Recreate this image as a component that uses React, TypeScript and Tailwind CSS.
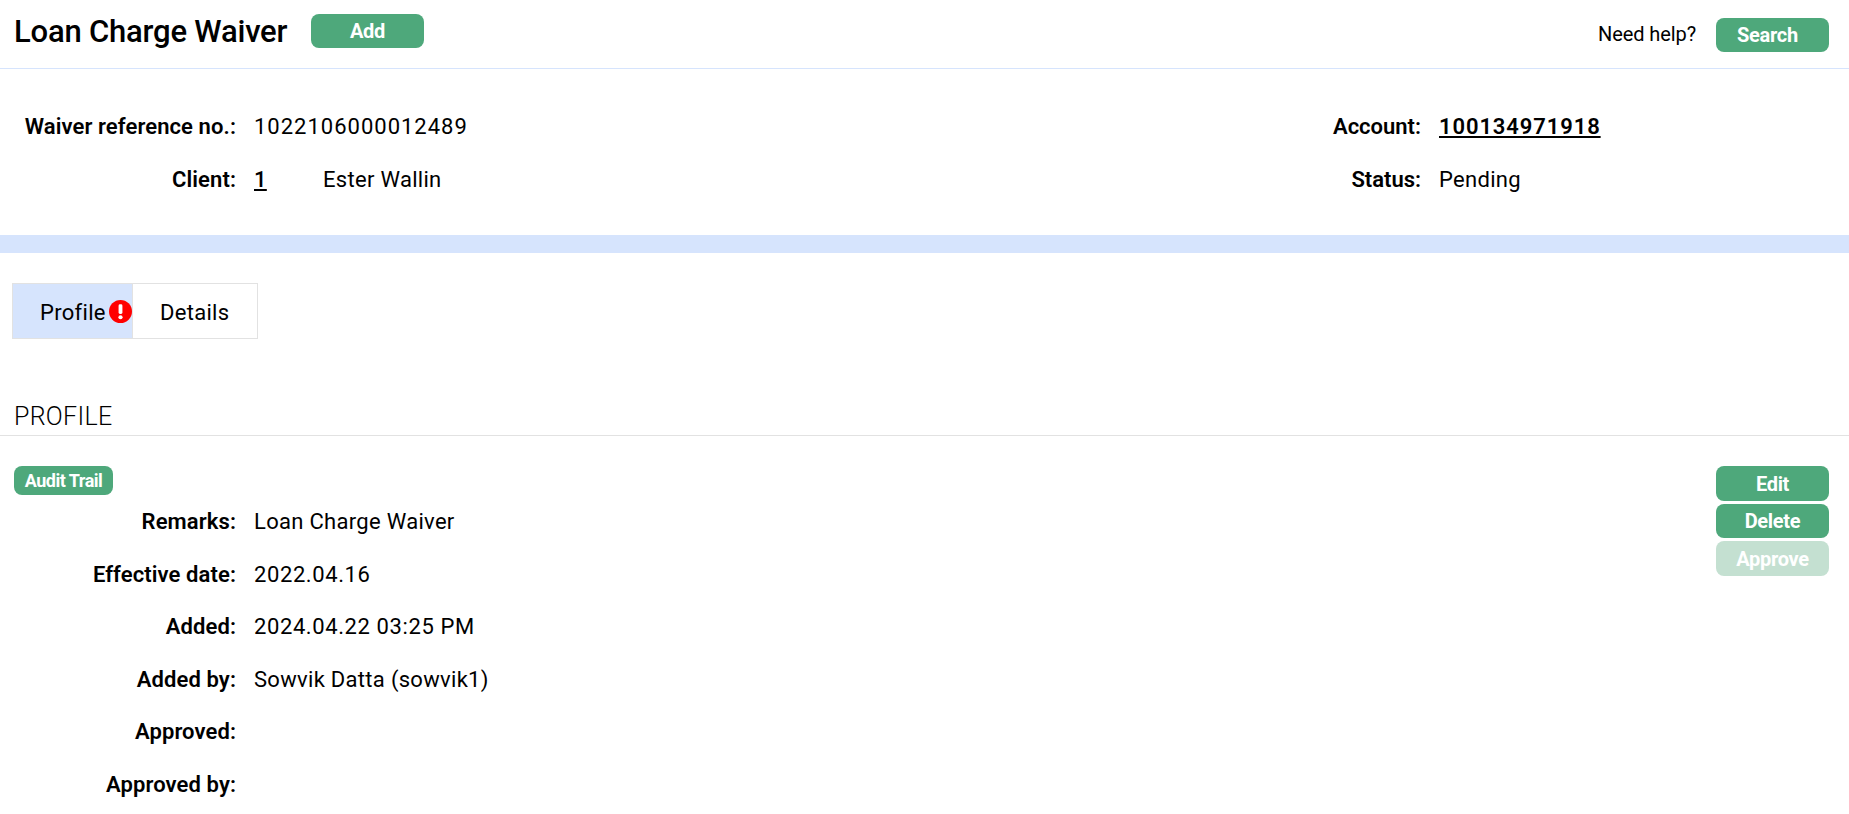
const Btn = ({ label, disabled, tall }: { label: string; disabled?: boolean; tall?: boolean }) => (
  <button
    className={
      disabled
        ? 'w-[113px] h-[35px] rounded-lg bg-[#c4e0d1] text-white text-[20px] font-bold tracking-[-0.3px]'
        : tall
          ? 'w-[113px] h-[35px] rounded-lg bg-[#4ea87b] text-white text-[20px] font-bold tracking-[-0.3px]'
          : 'w-[113px] h-[34px] rounded-lg bg-[#4ea87b] text-white text-[20px] font-bold tracking-[-0.3px]'
    }
  >
    {label}
  </button>
);

const Row = ({ label, children }: { label: string; children?: React.ReactNode }) => (
  <div className="flex items-center h-[52.5px] pt-[2px] text-[22px] leading-[32px]">
    <div className="w-[236px] text-right font-semibold tracking-[0.1px]">{label}</div>
    <div className="ml-[18px] tracking-[0.3px]">{children}</div>
  </div>
);

export default function App() {
  return (
    <div className="min-h-[814px] bg-white text-black font-['Roboto',sans-serif] overflow-hidden">
      <div className="flex items-start h-[69px] border-b border-[#d6e4fd] pl-[14px] pr-5">
        <h1 className="mt-[14px] text-[31px] leading-[36px] font-medium tracking-[-0.2px] w-[297px]">Loan Charge Waiver</h1>
        <div className="mt-[14px]">
          <Btn label="Add" />
        </div>
        <div className="ml-auto mt-[18px] flex items-center gap-5">
          <span className="text-[20px] tracking-[-0.1px] -mt-[2px]">Need help?</span>
          <button className="w-[113px] h-[34px] pr-[10px] rounded-lg bg-[#4ea87b] text-white text-[20px] font-bold tracking-[-0.3px]">
            Search
          </button>
        </div>
      </div>

      <div className="flex h-[166px] pt-[31px]">
        <div className="flex-1">
          <Row label="Waiver reference no.:">
            <span className="tracking-[1px]">1022106000012489</span>
          </Row>
          <Row label="Client:">
            <span className="flex">
              <a className="underline w-[69px] font-medium">1</a>
              <span>Ester Wallin</span>
            </span>
          </Row>
        </div>
        <div className="w-[728px] text-[22px] leading-[32px]">
          <div className="flex items-center h-[52.5px] pt-[2px]">
            <div className="w-[300px] text-right font-semibold">Account:</div>
            <a className="ml-[18px] font-semibold underline tracking-[0.9px]">100134971918</a>
          </div>
          <div className="flex items-center h-[52.5px] pt-[2px]">
            <div className="w-[300px] text-right font-semibold">Status:</div>
            <span className="ml-[18px] tracking-[0.3px]">Pending</span>
          </div>
        </div>
      </div>

      <div className="h-[18px] bg-[#d6e4fd]" />

      <div className="ml-3 mt-[30px] flex h-[56px] w-[246px] border border-[#e2e2e2] text-[22px] tracking-[0.3px]">
        <div className="flex items-center w-[119px] bg-[#d6e4fd] pl-[27px]">
          <span className="mt-[2px]">Profile</span>
          <svg viewBox="0 0 24 24" className="ml-[3px] w-[23px] h-[23px] shrink-0">
            <circle cx="12" cy="12" r="12" fill="#ff0000" />
            <rect x="10" y="4.5" width="4" height="10" rx="1.5" fill="#fff" />
            <circle cx="12" cy="18" r="2.2" fill="#fff" />
          </svg>
        </div>
        <div className="flex items-center border-l border-[#e2e2e2] pl-[27px]">
          <span className="mt-[2px]">Details</span>
        </div>
      </div>

      <h2 className="mt-[60px] pl-[14px] h-[37px] text-[25px] leading-[36px] font-light tracking-[0.3px] border-b border-[#e2e2e2]">PROFILE</h2>

      <div className="flex items-start pt-[30px] pr-5">
        <div className="flex-1">
          <button className="ml-[14px] w-[99px] h-[29px] rounded-lg bg-[#4ea87b] text-white text-[18px] leading-[27px] font-bold tracking-[-0.5px]">
            Audit Trail
          </button>
          <Row label="Remarks:">Loan Charge Waiver</Row>
          <Row label="Effective date:">
            <span className="tracking-[0.6px]">2022.04.16</span>
          </Row>
          <Row label="Added:">
            <span className="tracking-[0.6px]">2024.04.22 03:25 PM</span>
          </Row>
          <Row label="Added by:">Sowvik Datta (sowvik1)</Row>
          <Row label="Approved:" />
          <Row label="Approved by:" />
        </div>
        <div className="flex flex-col gap-[3px]">
          <Btn label="Edit" tall />
          <Btn label="Delete" />
          <Btn label="Approve" disabled />
        </div>
      </div>
    </div>
  );
}
